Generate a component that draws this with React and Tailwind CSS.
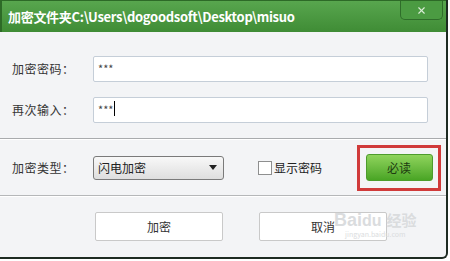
import { X } from 'lucide-react';

const font = { fontFamily: '"Microsoft YaHei", "Noto Sans CJK SC", "Liberation Sans", sans-serif' };

function Field({ label, value, caret }) {
  return (
    <div className="flex items-center h-[26px]">
      <span className="w-[93px] pl-[12px] text-[12px] text-[#333] tracking-[0.5px]">{label}</span>
      <div className="w-[335px] h-[26px] bg-white border border-[#c5ced8] rounded-[2px] flex items-start pl-[4px] pt-[3px] text-[11px] text-[#444]">
        <span>{value}</span>
        {caret && <span className="w-px h-[15px] bg-black ml-px" />}
      </div>
    </div>
  );
}

export default function App() {
  return (
    <div className="w-[450px] h-[261px] bg-white overflow-hidden" style={font}>
      <div className="w-[448px] h-[259px] flex flex-col bg-[#f3f4f6] border-r-2 border-b-2 border-[#1e2b22] rounded-br-[6px] overflow-hidden">
        {/* Title bar */}
        <div className="relative h-[32px] shrink-0 bg-gradient-to-b from-[#58a64e] to-[#3f8c35] border-t border-l-2 border-[#2d6a27] flex items-center pl-[6px]">
          <span className="text-white text-[13px] font-bold tracking-[-0.3px]">加密文件夹C:\Users\dogoodsoft\Desktop\misuo</span>
          <div className="absolute right-[3px] top-0 w-[43px] h-[19px] rounded-b-[5px] border border-t-0 border-[#2f6d2a] bg-[#4b9b42] flex items-center justify-center">
            <X className="w-[11px] h-[11px] text-[#d9ecd5]" strokeWidth={2.5} />
          </div>
        </div>

        {/* Passwords */}
        <div className="h-[106px] shrink-0 flex flex-col gap-[15px] pt-[24px]">
          <Field label="加密密码：" value="***" />
          <Field label="再次输入：" value="***" caret />
        </div>
        <div className="h-[2px] shrink-0 bg-[#a9abad] border-b border-white" />

        {/* Options */}
        <div className="h-[55px] shrink-0 flex items-center">
          <span className="w-[93px] pl-[12px] text-[12px] text-[#333] tracking-[0.5px]">加密类型：</span>
          <div className="w-[131px] h-[24px] border border-[#7a7a7a] rounded-[3px] bg-gradient-to-b from-[#f8f8f8] to-[#dedede] flex items-center justify-between pl-[4px] pr-[6px] text-[12px] text-[#222]">
            <span>闪电加密</span>
            <svg width="8" height="5" viewBox="0 0 8 5"><path d="M0 0h8L4 5z" fill="#222" /></svg>
          </div>
          <div className="ml-[34px] flex items-center">
            <div className="w-[14px] h-[14px] border border-[#8e8f8f] bg-white" />
            <span className="ml-[2px] text-[12px] text-[#222]">显示密码</span>
          </div>
          <div className="ml-[35px] w-[84px] h-[46px] border-[3px] border-[#d03a3a] flex items-center justify-center">
            <div className="w-[67px] h-[27px] rounded-[3px] border border-[#4d9c2d] bg-gradient-to-b from-[#8fd45c] to-[#49a524] flex items-center justify-center text-[12px] text-[#1d3b10]">
              必读
            </div>
          </div>
        </div>
        <div className="h-[2px] shrink-0 bg-[#b5b7b9] border-b border-white" />

        {/* Buttons */}
        <div className="relative flex-1 flex items-start pt-[15px] pl-[95px] gap-[36px]">
          <div className="w-[128px] h-[29px] bg-white border border-[#c9c9c9] rounded-[2px] flex items-center justify-center text-[12px] text-[#333]">加密</div>
          <div className="w-[128px] h-[29px] bg-white border border-[#c9c9c9] rounded-[2px] flex items-center justify-center text-[12px] text-[#333]">取消</div>
          <div className="absolute left-[334px] top-[14px] flex flex-col items-center text-[#dadcde] leading-none">
            <span className="text-[18px] font-bold" style={{ fontFamily: '"Liberation Sans", sans-serif' }}>Bai<span className="text-[16px]">du</span> <span className="text-[15px]" style={font}>经验</span></span>
            <span className="text-[7px] mt-[2px]">jingyan.baidu.com</span>
          </div>
        </div>
      </div>
    </div>
  );
}
